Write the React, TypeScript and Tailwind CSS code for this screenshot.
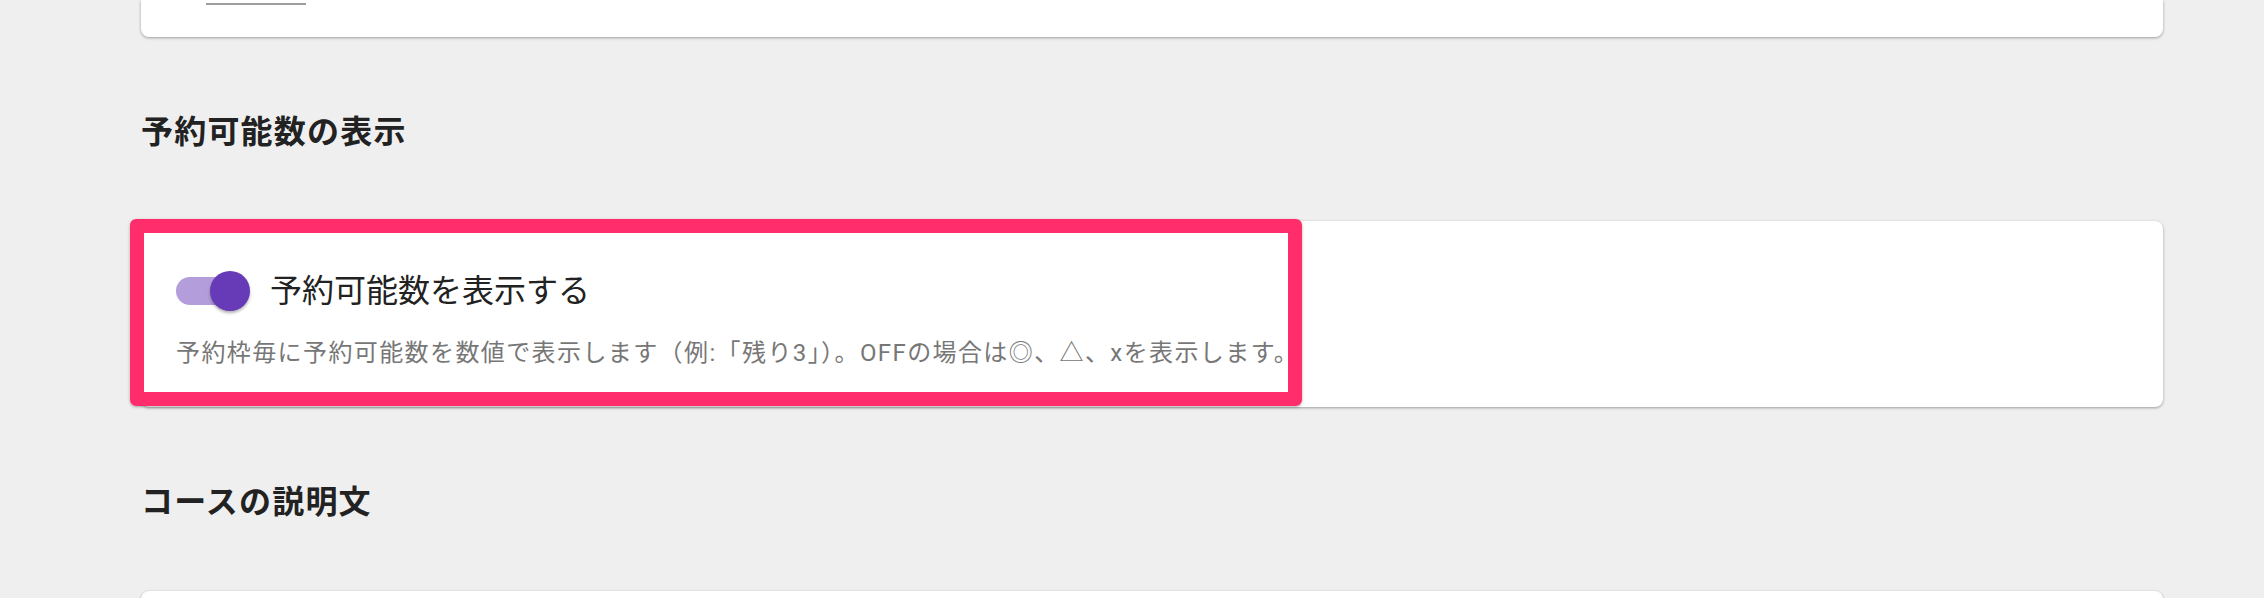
import React from "react";

const font = {
  fontFamily: 'Roboto, "Noto Sans CJK JP", sans-serif',
};

const Section: React.FC<{ title: string }> = ({ title }) => (
  <h2 className="pt-[71px] pb-[65px] text-[32px] leading-[48px] font-bold text-[#222] tracking-[1.2px]">
    {title}
  </h2>
);

const Toggle: React.FC<{ on: boolean }> = ({ on }) => (
  <div className="relative w-[68px] h-[28px] rounded-full bg-[#b39ddb] shrink-0">
    <div
      className={
        on
          ? "absolute right-[-6px] top-[-6px] w-10 h-10 rounded-full bg-[#673ab7] shadow-[0_2px_3px_rgba(0,0,0,0.3)]"
          : "absolute left-[-6px] top-[-6px] w-10 h-10 rounded-full bg-white shadow-[0_2px_3px_rgba(0,0,0,0.3)]"
      }
    />
  </div>
);

export default function App() {
  return (
    <div className="h-[598px] bg-[#efefef] pl-[141px] overflow-hidden" style={font}>
      <div className="w-[2022px]">
        {/* previous card, cut off at the top */}
        <div className="h-[37px] bg-white rounded-b-lg shadow-[0_1px_3px_rgba(0,0,0,0.35)] pt-[3px] pl-[65px]">
          <div className="w-[100px] h-[2px] bg-[#9e9e9e]" />
        </div>

        <Section title="予約可能数の表示" />

        <div className="relative bg-white rounded-lg shadow-[0_1px_3px_rgba(0,0,0,0.35)] pt-[32px] pb-[36px] px-[35px]">
          <div className="flex items-center h-[76px]">
            <Toggle on />
            <span className="ml-[26px] text-[32px] leading-[48px] text-[#222]">
              予約可能数を表示する
            </span>
          </div>
          <p className="text-[24px] leading-[36px] text-[#777] mt-[6px] tracking-[1.4px]">
            予約枠毎に予約可能数を数値で表示します（例:「残り3」）。OFFの場合は◎、△、xを表示します。
          </p>
          {/* highlight annotation */}
          <div className="absolute left-[-11px] top-[-2px] w-[1172px] h-[187px] border-[14px] border-[#ff2d6b] rounded-md shadow-[0_1px_3px_rgba(0,0,0,0.3)]" />
        </div>

        <Section title="コースの説明文" />

        <div className="h-[200px] bg-white rounded-t-lg shadow-[0_1px_3px_rgba(0,0,0,0.35)]" />
      </div>
    </div>
  );
}
